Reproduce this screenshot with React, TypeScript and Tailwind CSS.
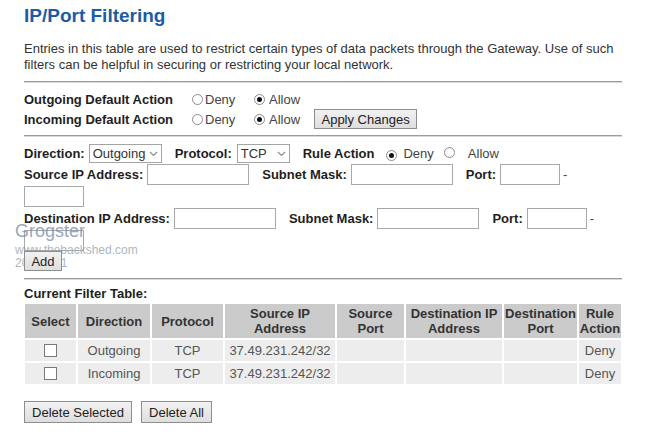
import React from "react";

const Radio = ({ checked }: { checked?: boolean }) => (
  <span className="inline-flex h-[11px] w-[11px] shrink-0 items-center justify-center rounded-full border border-[#8c8c8c] bg-white">
    {checked && <span className="h-[5px] w-[5px] rounded-full bg-[#111]" />}
  </span>
);

const Chevron = () => (
  <svg width="9" height="6" viewBox="0 0 9 6" className="shrink-0">
    <polyline points="1,1 4.5,4.5 8,1" fill="none" stroke="#8a8a8a" strokeWidth="1.1" />
  </svg>
);

const Select = ({ value, w }: { value: string; w: string }) => (
  <div className={`flex h-[19px] ${w} items-center justify-between border border-[#a4a4a4] bg-white pl-[3px] pr-[3px] font-normal text-[#333]`}>
    <span>{value}</span>
    <Chevron />
  </div>
);

const Input = ({ w }: { w: string }) => (
  <div className={`h-[21px] ${w} shrink-0 border border-[#a8a8a8] bg-white`} />
);

const Btn = ({ children, className = "" }: { children: React.ReactNode; className?: string }) => (
  <div
    className={`flex items-center justify-center border border-[#8e8e8e] bg-gradient-to-b from-[#f2f2f2] to-[#dedede] text-[13px] text-[#222] ${className}`}
  >
    {children}
  </div>
);

const Hr = ({ className = "" }: { className?: string }) => (
  <div className={`w-[598px] border-t border-b border-t-[#9c9c9c] border-b-[#d8d8d8] ${className}`} />
);

const Label = ({ children, className = "" }: { children: React.ReactNode; className?: string }) => (
  <span className={`font-bold text-[#1e1e1e] ${className}`}>{children}</span>
);

export default function App() {
  const rows = [
    { dir: "Outgoing", proto: "TCP", ip: "37.49.231.242/32", action: "Deny" },
    { dir: "Incoming", proto: "TCP", ip: "37.49.231.242/32", action: "Deny" },
  ];
  return (
    <div className="relative h-[444px] w-[650px] overflow-hidden bg-white pl-[24px] pt-[5px] font-['Liberation_Sans',Arial,sans-serif] text-[13px] leading-[15px] text-[#444]">
      <h1 className="text-[19px] font-bold leading-[21px] text-[#1d5ba6]">IP/Port Filtering</h1>
      <p className="mt-[15px] w-[600px] leading-[16px] text-[#333]">
        Entries in this table are used to restrict certain types of data packets through the Gateway. Use of such filters can be helpful in securing or restricting your local network.
      </p>
      <Hr className="mt-[8px]" />

      {/* Default actions */}
      <div className="mt-[7px] flex h-[18px] items-center">
        <Label className="w-[168px]">Outgoing Default Action</Label>
        <div className="flex w-[62px] items-center gap-[2px]">
          <Radio />
          <span>Deny</span>
        </div>
        <div className="flex items-center gap-[4px]">
          <Radio checked />
          <span>Allow</span>
        </div>
      </div>
      <div className="mt-[1px] flex h-[20px] items-center">
        <Label className="w-[168px]">Incoming Default Action</Label>
        <div className="flex w-[62px] items-center gap-[2px]">
          <Radio />
          <span>Deny</span>
        </div>
        <div className="flex items-center gap-[4px]">
          <Radio checked />
          <span>Allow</span>
        </div>
        <Btn className="ml-[14px] h-[20px] w-[103px]">Apply Changes</Btn>
      </div>
      <Hr className="mt-[6px]" />

      {/* Rule form */}
      <div className="mt-[7px] flex h-[19px] items-center">
        <Label>Direction:</Label>
        <div className="ml-[4px]">
          <Select value="Outgoing" w="w-[73px]" />
        </div>
        <Label className="ml-[13px]">Protocol:</Label>
        <div className="ml-[5px]">
          <Select value="TCP" w="w-[53px]" />
        </div>
        <Label className="ml-[13px]">Rule Action</Label>
        <span className="ml-[12px]">
          <Radio checked />
        </span>
        <span className="ml-[6px]">Deny</span>
        <span className="ml-[10px]">
          <Radio />
        </span>
        <span className="ml-[13px]">Allow</span>
      </div>
      <div className="mt-[1px] flex h-[21px] items-center">
        <Label>Source IP Address:</Label>
        <div className="ml-[4px]">
          <Input w="w-[102px]" />
        </div>
        <Label className="ml-[13px]">Subnet Mask:</Label>
        <div className="ml-[4px]">
          <Input w="w-[102px]" />
        </div>
        <Label className="ml-[13px]">Port:</Label>
        <div className="ml-[4px]">
          <Input w="w-[60px]" />
        </div>
        <span className="ml-[3px]">-</span>
      </div>
      <div className="mt-[1px]">
        <Input w="w-[60px]" />
      </div>
      <div className="mt-[1px] flex h-[21px] items-center">
        <Label>Destination IP Address:</Label>
        <div className="ml-[4px]">
          <Input w="w-[102px]" />
        </div>
        <Label className="ml-[13px]">Subnet Mask:</Label>
        <div className="ml-[4px]">
          <Input w="w-[102px]" />
        </div>
        <Label className="ml-[13px]">Port:</Label>
        <div className="ml-[4px]">
          <Input w="w-[60px]" />
        </div>
        <span className="ml-[3px]">-</span>
      </div>
      <div className="mt-[1px]">
        <Input w="w-[60px]" />
      </div>
      <div className="relative z-10 mt-0 w-[38px]">
        <Btn className="h-[20px] w-[38px]">Add</Btn>
      </div>
      <Hr className="mt-[7px]" />

      <div className="mt-[6px]">
        <Label>Current Filter Table:</Label>
      </div>
      <table className="-ml-px mt-[1px] w-[600px] table-fixed border-separate border-spacing-[2px]">
        <colgroup>
          <col className="w-[51px]" />
          <col className="w-[72px]" />
          <col className="w-[71px]" />
          <col className="w-[110px]" />
          <col className="w-[67px]" />
          <col className="w-[96px]" />
          <col className="w-[73px]" />
          <col className="w-[42px]" />
        </colgroup>
        <thead>
          <tr className="h-[34px] bg-[#cbcbcb] text-center font-bold text-[#333]">
            <th className="p-0">Select</th>
            <th className="p-0">Direction</th>
            <th className="p-0">Protocol</th>
            <th className="p-0">Source IP<br />Address</th>
            <th className="p-0">Source<br />Port</th>
            <th className="p-0">Destination IP<br />Address</th>
            <th className="p-0">Destination<br />Port</th>
            <th className="p-0">Rule<br />Action</th>
          </tr>
        </thead>
        <tbody>
          {rows.map((r) => (
            <tr key={r.dir} className="h-[21px] bg-[#ededed] text-center text-[#555]">
              <td className="p-0">
                <div className="mx-auto h-[13px] w-[13px] border border-[#7a7a7a] bg-white" />
              </td>
              <td className="p-0">{r.dir}</td>
              <td className="p-0">{r.proto}</td>
              <td className="p-0">{r.ip}</td>
              <td className="p-0"></td>
              <td className="p-0"></td>
              <td className="p-0"></td>
              <td className="p-0">{r.action}</td>
            </tr>
          ))}
        </tbody>
      </table>
      <div className="mt-[15px] flex gap-[9px]">
        <Btn className="h-[22px] w-[108px]">Delete Selected</Btn>
        <Btn className="h-[22px] w-[71px]">Delete All</Btn>
      </div>

      {/* watermark */}
      <div className="pointer-events-none absolute left-[15px] top-[221px] z-[5] opacity-80">
        <div className="text-[18px] leading-[20px] text-[#7d93a8]">Grogster</div>
        <div className="mt-[3px] text-[12px] leading-[13px] text-[#9aa6b2]">www.thebackshed.com</div>
        <div className="text-[12px] leading-[13px] text-[#9aa6b2]">2016/2/11</div>
      </div>
    </div>
  );
}
